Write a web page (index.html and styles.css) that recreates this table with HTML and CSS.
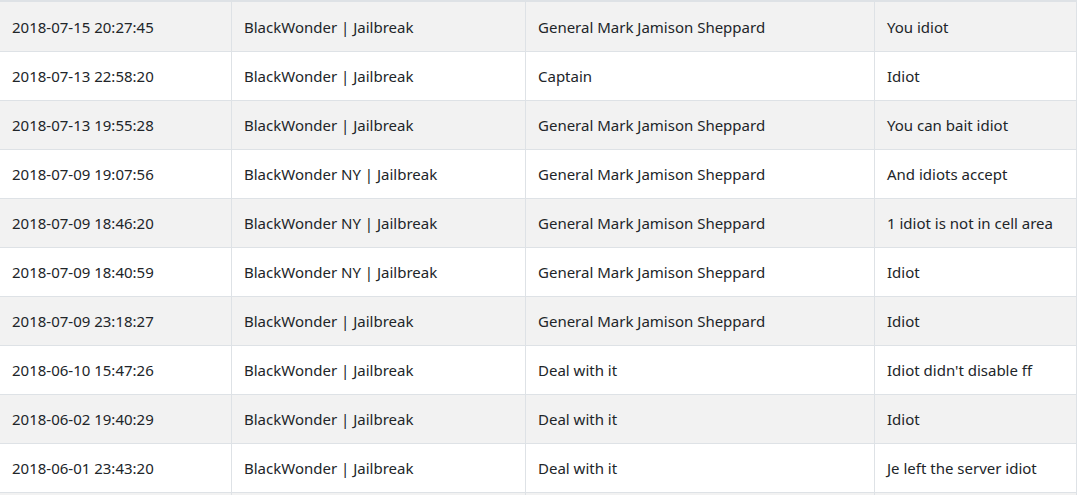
FILE: index.html
```html
<!DOCTYPE html>
<html>
<head>
<meta charset="utf-8">
<link rel="stylesheet" href="styles.css">
</head>
<body>
<table class="log">
  <colgroup>
    <col class="c1"><col class="c2"><col class="c3"><col class="c4">
  </colgroup>
  <tbody>
    <tr class="first"><td>2018-07-15 20:27:45</td><td>BlackWonder | Jailbreak</td><td>General Mark Jamison Sheppard</td><td>You idiot</td></tr>
    <tr><td>2018-07-13 22:58:20</td><td>BlackWonder | Jailbreak</td><td>Captain</td><td>Idiot</td></tr>
    <tr><td>2018-07-13 19:55:28</td><td>BlackWonder | Jailbreak</td><td>General Mark Jamison Sheppard</td><td>You can bait idiot</td></tr>
    <tr><td>2018-07-09 19:07:56</td><td>BlackWonder NY | Jailbreak</td><td>General Mark Jamison Sheppard</td><td>And idiots accept</td></tr>
    <tr><td>2018-07-09 18:46:20</td><td>BlackWonder NY | Jailbreak</td><td>General Mark Jamison Sheppard</td><td>1 idiot is not in cell area</td></tr>
    <tr><td>2018-07-09 18:40:59</td><td>BlackWonder NY | Jailbreak</td><td>General Mark Jamison Sheppard</td><td>Idiot</td></tr>
    <tr><td>2018-07-09 23:18:27</td><td>BlackWonder | Jailbreak</td><td>General Mark Jamison Sheppard</td><td>Idiot</td></tr>
    <tr><td>2018-06-10 15:47:26</td><td>BlackWonder | Jailbreak</td><td>Deal with it</td><td>Idiot didn't disable ff</td></tr>
    <tr><td>2018-06-02 19:40:29</td><td>BlackWonder | Jailbreak</td><td>Deal with it</td><td>Idiot</td></tr>
    <tr><td>2018-06-01 23:43:20</td><td>BlackWonder | Jailbreak</td><td>Deal with it</td><td>Je left the server idiot</td></tr>
    <tr><td>&nbsp;</td><td>&nbsp;</td><td>&nbsp;</td><td>&nbsp;</td></tr>
  </tbody>
</table>
</body>
</html>
```
FILE: styles.css
```css
html, body {
  margin: 0;
  padding: 0;
  background: #ffffff;
}
body {
  font-family: "Noto Sans", "Open Sans", sans-serif;
  font-size: 15px;
  color: #212529;
}
.log {
  border-collapse: separate;
  border-spacing: 0;
  table-layout: fixed;
  width: 1077px;
  border-top: 2px solid #dee2e6;
}
.c1 { width: 232px; }
.c2 { width: 294px; }
.c3 { width: 349px; }
.c4 { width: 202px; }
.log td {
  height: 48px;
  padding: 0 12px;
  border-bottom: 1px solid #dee2e6;
  border-right: 1px solid #dee2e6;
  vertical-align: middle;
  white-space: nowrap;
  box-sizing: content-box;
}
.log tr.first td {
  padding-top: 1px;
}
.log tr:nth-child(odd) td {
  background: #f2f2f2;
}
```
